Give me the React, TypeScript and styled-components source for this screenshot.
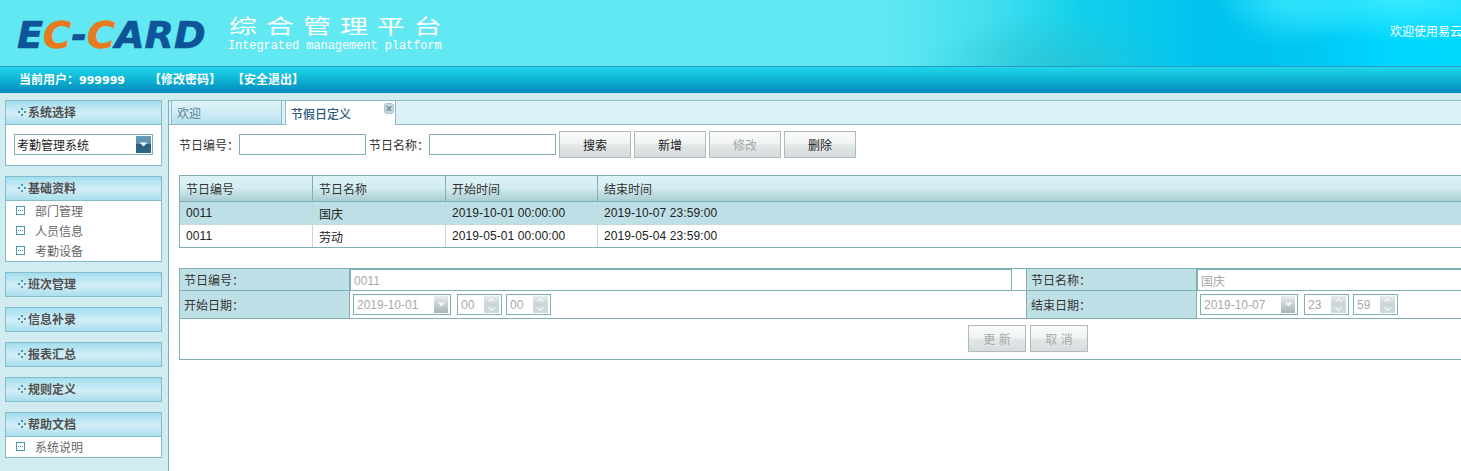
import React from "react";
import styled, { createGlobalStyle } from "styled-components";

const FONT = `"Liberation Sans", "Noto Sans CJK SC", sans-serif`;
const LINE = "#7fb0b3";

const Global = createGlobalStyle`
  html, body { margin: 0; padding: 0; overflow: hidden; background: #d1ecf1; }
  * { box-sizing: border-box; }
  body { font: 12px ${FONT}; color: #222; }
`;

const Page = styled.div`
  width: 1600px;
  min-height: 471px;
  display: flex;
  flex-direction: column;
  background: #d1ecf1;
`;

const Header = styled.header`
  height: 67px;
  border-bottom: 1px solid #2a9ac6;
  display: flex;
  align-items: flex-start;
  background:
    radial-gradient(ellipse 130px 60px at 1050px 72px, rgba(45, 190, 205, 0.7), rgba(45, 190, 205, 0) 100%),
    radial-gradient(ellipse 190px 42px at 1400px 0, rgba(62, 235, 255, 0.9), rgba(62, 235, 255, 0) 100%),
    radial-gradient(ellipse 70px 50px at 1290px 0, rgba(50, 228, 252, 0.75), rgba(50, 228, 252, 0) 100%),
    linear-gradient(90deg, #62e8f2 0, #62e8f2 880px, #42dfee 990px, #12d0ea 1080px, #00c2ee 1210px, #00c6f2 1300px, #00d8ff 1400px, #04d6fb 1600px);
`;

const Logo = styled.div`
  margin: 14px 0 0 17px;
  width: 191px;
  font: italic 700 38px/42px "DejaVu Sans", sans-serif;
  white-space: nowrap;
  color: #0d5598;
  -webkit-text-stroke: 0.6px currentColor;
  transform-origin: left center;
  transform: scaleX(1.005);
`;

const LogoAccent = styled.span`
  color: #e87a1e;
`;

const TitleBlock = styled.div`
  margin: 16px 0 0 21px;
  color: #fff;
  white-space: nowrap;
`;

const TitleMain = styled.div`
  font: 400 20px/20px "Noto Sans CJK SC", sans-serif;
  letter-spacing: 6.4px;
  height: 24px;
  transform-origin: left top;
  transform: scaleX(1.4);
`;

const TitleSub = styled.div`
  margin-left: -1px;
  font: 400 12px/12px "Liberation Mono", monospace;
  letter-spacing: -0.08px;
`;

const Welcome = styled.div`
  margin: 25px 138px 0 auto;
  color: #fff;
  line-height: 14px;
  white-space: nowrap;
`;

const UserBar = styled.div`
  height: 26px;
  display: flex;
  align-items: center;
  padding: 0 0 3px 19px;
  color: #fff;
  font-weight: 700;
  white-space: nowrap;
  background: linear-gradient(#21d6ea, #0fb6d6 45%, #0088ba);
`;

const UserNumber = styled.span`
  font: 700 11px "DejaVu Sans", sans-serif;
`;

const BarLink = styled.span<{ $gap: number }>`
  margin-left: ${(p) => p.$gap}px;
`;

const Main = styled.div`
  flex: 1;
  display: flex;
  align-items: stretch;
`;

const Sidebar = styled.aside`
  width: 168px;
  flex: none;
  padding: 7px 6px 0 5px;
  display: flex;
  flex-direction: column;
  gap: 10px;
`;

const Panel = styled.section`
  border: 1px solid #87bccc;
  background: #fff;
`;

const PanelHead = styled.div`
  height: 23px;
  display: flex;
  align-items: center;
  gap: 2px;
  padding: 0 0 2px 12px;
  font-weight: 700;
  color: #505050;
  background: linear-gradient(#a3deef, #d3eef6 55%, #a8deed);
`;

const PanelHeadBordered = styled(PanelHead)`
  border-bottom: 1px solid #87bccc;
  height: 24px;
`;

const SelectWrap = styled.div`
  padding: 9px 8px 10px;
`;

const Select = styled.div`
  height: 21px;
  border: 1px solid #7fb0b3;
  display: flex;
  align-items: center;
  justify-content: space-between;
  padding: 0 1px 0 2px;
  color: #222;
`;

const SelectArrow = styled.span`
  width: 15px;
  height: 17px;
  display: flex;
  align-items: center;
  justify-content: center;
  background: linear-gradient(#6a9cbb, #5a90b0 45%, #2a5e7e 50%, #32688a);
`;

const MenuList = styled.ul`
  list-style: none;
  margin: 0;
  padding: 0;
`;

const MenuItem = styled.li`
  height: 20px;
  display: flex;
  align-items: center;
  gap: 10px;
  padding: 0 0 2px 10px;
  color: #666;
`;

const Content = styled.main`
  flex: 1;
  margin-top: 7px;
  background: #fff;
  border-left: 1px solid #7fb0b8;
`;

const TabStrip = styled.div`
  height: 25px;
  display: flex;
  gap: 3px;
  padding-left: 2px;
  background: #dcf0f7;
  border-top: 1px solid #8dbcc6;
  border-bottom: 1px solid #8dbcc6;
`;

const Tab = styled.div<{ $active?: boolean }>`
  position: relative;
  width: 111px;
  height: ${(p) => (p.$active ? 24 : 23)}px;
  padding-left: 5px;
  display: flex;
  align-items: center;
  border: solid #8dbcc6;
  border-width: 0 1px;
  color: ${(p) => (p.$active ? "#2d5a7c" : "#5d7f96")};
  font-weight: ${(p) => (p.$active ? 500 : 400)};
  background: ${(p) => (p.$active ? "#fff" : "linear-gradient(#dff3f9, #cdebf4 55%, #b2e1ee)")};
`;

const TabClose = styled.svg`
  position: absolute;
  right: 1px;
  top: 2px;
`;

const Toolbar = styled.div`
  display: flex;
  align-items: center;
  height: 27px;
  margin: 6px 0 17px 10px;
`;

const ToolLabel = styled.label`
  width: 60px;
  flex: none;
  color: #333;
`;

const ToolInput = styled.input`
  width: 127px;
  height: 21px;
  flex: none;
  margin-right: 3px;
  border: 1px solid ${LINE};
  background: #fff;
  outline: none;
  padding: 0 3px;
  font: 12px ${FONT};
`;

const Button = styled.button<{ $w: number }>`
  width: ${(p) => p.$w}px;
  height: 27px;
  flex: none;
  margin-right: 3px;
  padding: 0;
  border: 1px solid #b2bbbb;
  font: 12px ${FONT};
  color: #222;
  background: linear-gradient(#f9fbfa, #eff3f2 48%, #e2e7e7 52%, #d6dcdd);
  &:disabled { color: #a3aaaa; }
`;

const Grid = styled.table`
  width: 1400px;
  margin-left: 10px;
  border-collapse: separate;
  border-spacing: 0;
  table-layout: fixed;
  border: 1px solid ${LINE};
`;

const Th = styled.th<{ $w?: number }>`
  width: ${(p) => (p.$w ? `${p.$w}px` : "auto")};
  height: 26px;
  padding: 0 0 0 6px;
  text-align: left;
  font-weight: 400;
  color: #333;
  border-right: 1px solid ${LINE};
  border-bottom: 1px solid ${LINE};
  background: linear-gradient(#ddf2f6, #d6eef2 45%, #a9cdd3);
`;

const Tr = styled.tr<{ $selected?: boolean }>`
  background: ${(p) => (p.$selected ? "#bedfe5" : "#fff")};
`;

const Td = styled.td<{ $last?: boolean }>`
  height: ${(p) => (p.$last ? 22 : 23)}px;
  padding: 0 0 0 6px;
  letter-spacing: 0.1px;
  color: #222;
  border-right: 1px solid #c6d8dd;
  border-bottom: ${(p) => (p.$last ? "0" : "1px solid #c6d8dd")};
`;

const Form = styled.form`
  margin: 20px 0 0 10px;
  width: 1421px;
  border: solid ${LINE};
  border-width: 1px 0 1px 1px;
  display: grid;
  grid-template-columns: 170px 676px 171px 1fr;
  grid-template-rows: 22px 28px 40px;
`;

const FieldLabel = styled.div<{ $lead?: boolean }>`
  display: flex;
  align-items: center;
  padding-left: 4px;
  color: #333;
  background: #bfdfe6;
  border-bottom: 1px solid ${LINE};
  border-right: 1px solid ${LINE};
  border-left: ${(p) => (p.$lead ? "0" : `1px solid ${LINE}`)};
`;

const FieldCell = styled.div`
  display: flex;
  align-items: center;
  border-bottom: 1px solid ${LINE};
`;

const FieldCellPad = styled(FieldCell)`
  padding-left: 3px;
`;

const WideInput = styled.input<{ $w: number }>`
  width: ${(p) => p.$w}px;
  height: 21px;
  padding: 1px 3px 0;
  border: 1px solid ${LINE};
  border-bottom-width: 0;
  outline: none;
  background: #fff;
  color: #a3aaaa;
  font: 12px ${FONT};
`;

const Combo = styled.div<{ $w: number; $gap: number }>`
  width: ${(p) => p.$w}px;
  height: 21px;
  margin-right: ${(p) => p.$gap}px;
  padding: 1px 2px 0 3px;
  display: flex;
  align-items: center;
  justify-content: space-between;
  border: 1px solid ${LINE};
  color: #a3aaaa;
  background: #fff;
`;

const ComboArrow = styled.span`
  width: 14px;
  height: 17px;
  margin-top: -1px;
  display: flex;
  align-items: center;
  justify-content: center;
  background: linear-gradient(#e9eded, #c6d0d3 50%, #a9b5b9);
`;

const Spin = styled.span`
  width: 15px;
  height: 17px;
  margin-top: -1px;
  display: flex;
  flex-direction: column;
`;

const SpinPart = styled.span<{ $down?: boolean }>`
  flex: 1;
  display: flex;
  align-items: center;
  justify-content: center;
  background: ${(p) => (p.$down ? "#cfd9dc" : "linear-gradient(#e6ebeb, #c6d2d5)")};
`;

const Actions = styled.div`
  grid-column: 1 / -1;
  display: flex;
  align-items: flex-start;
  gap: 1px;
  padding: 6px 0 0 788px;
`;

const Dots = () => (
  <svg width="8" height="8" viewBox="0 0 8 8">
    <g fill="#4c97ab">
      <rect x="3" y="0" width="2" height="2" />
      <rect x="0" y="3" width="2" height="2" />
      <rect x="6" y="3" width="2" height="2" />
      <rect x="3" y="6" width="2" height="2" />
    </g>
  </svg>
);

const BoxIcon = () => (
  <svg width="9" height="9" viewBox="0 0 9 9">
    <rect x="0.5" y="0.5" width="8" height="8" fill="#fff" stroke="#4a9ab4" />
    <g fill="#4a9ab4">
      <rect x="2" y="4" width="1" height="1" />
      <rect x="4" y="4" width="1" height="1" />
      <rect x="6" y="4" width="1" height="1" />
    </g>
  </svg>
);

const DownTriangle = ({ color }: { color: string }) => (
  <svg width="9" height="5" viewBox="0 0 9 5">
    <path d="M0.5 0.5H8.5L4.5 4.5Z" fill={color} />
  </svg>
);

const Chevron = ({ up }: { up?: boolean }) => (
  <svg width="7" height="4" viewBox="0 0 7 4">
    <path d={up ? "M0.5 3.5L3.5 0.7L6.5 3.5" : "M0.5 0.5L3.5 3.3L6.5 0.5"} fill="none" stroke="#f4f7f7" strokeWidth="1.2" />
  </svg>
);

const CloseIcon = () => (
  <TabClose width="10" height="11" viewBox="0 0 10 11">
    <rect x="0.5" y="0.5" width="9" height="10" rx="2.5" fill="#c4d7de" stroke="#a9c6d0" />
    <path d="M2.8 3.2L7.2 7.8M7.2 3.2L2.8 7.8" stroke="#6f8d9c" strokeWidth="1.6" />
  </TabClose>
);

const DateBox = ({ value }: { value: string }) => (
  <Combo $w={98} $gap={6}>
    <span>{value}</span>
    <ComboArrow>
      <DownTriangle color="#f2f5f5" />
    </ComboArrow>
  </Combo>
);

const SpinBox = ({ value, gap }: { value: string; gap: number }) => (
  <Combo $w={45} $gap={gap}>
    <span>{value}</span>
    <Spin>
      <SpinPart>
        <Chevron up />
      </SpinPart>
      <SpinPart $down>
        <Chevron />
      </SpinPart>
    </Spin>
  </Combo>
);

const SideHead = ({ title }: { title: string }) => (
  <PanelHead>
    <Dots />
    <span>{title}</span>
  </PanelHead>
);

const SideHeadOpen = ({ title }: { title: string }) => (
  <PanelHeadBordered>
    <Dots />
    <span>{title}</span>
  </PanelHeadBordered>
);

const Menu = ({ items }: { items: string[] }) => (
  <MenuList>
    {items.map((t) => (
      <MenuItem key={t}>
        <BoxIcon />
        <span>{t}</span>
      </MenuItem>
    ))}
  </MenuList>
);

const rows = [
  ["0011", "国庆", "2019-10-01 00:00:00", "2019-10-07 23:59:00"],
  ["0011", "劳动", "2019-05-01 00:00:00", "2019-05-04 23:59:00"],
];

export default function App() {
  return (
    <Page>
      <Global />
      <Header>
        <Logo>
          E<LogoAccent>C</LogoAccent>-<LogoAccent>C</LogoAccent>ARD
        </Logo>
        <TitleBlock>
          <TitleMain>综合管理平台</TitleMain>
          <TitleSub>Integrated management platform</TitleSub>
        </TitleBlock>
        <Welcome>欢迎使用易云</Welcome>
      </Header>
      <UserBar>
        <span>当前用户：<UserNumber>999999</UserNumber></span>
        <BarLink $gap={24}>【修改密码】</BarLink>
        <BarLink $gap={11}>【安全退出】</BarLink>
      </UserBar>
      <Main>
        <Sidebar>
          <Panel>
            <SideHeadOpen title="系统选择" />
            <SelectWrap>
              <Select>
                <span>考勤管理系统</span>
                <SelectArrow>
                  <DownTriangle color="#fff" />
                </SelectArrow>
              </Select>
            </SelectWrap>
          </Panel>
          <Panel>
            <SideHeadOpen title="基础资料" />
            <Menu items={["部门管理", "人员信息", "考勤设备"]} />
          </Panel>
          <Panel><SideHead title="班次管理" /></Panel>
          <Panel><SideHead title="信息补录" /></Panel>
          <Panel><SideHead title="报表汇总" /></Panel>
          <Panel><SideHead title="规则定义" /></Panel>
          <Panel>
            <SideHeadOpen title="帮助文档" />
            <Menu items={["系统说明"]} />
          </Panel>
        </Sidebar>
        <Content>
          <TabStrip>
            <Tab>欢迎</Tab>
            <Tab $active>
              节假日定义
              <CloseIcon />
            </Tab>
          </TabStrip>
          <Toolbar>
            <ToolLabel>节日编号：</ToolLabel>
            <ToolInput />
            <ToolLabel>节日名称：</ToolLabel>
            <ToolInput />
            <Button $w={72}>搜索</Button>
            <Button $w={72}>新增</Button>
            <Button $w={72} disabled>修改</Button>
            <Button $w={72}>删除</Button>
          </Toolbar>
          <Grid>
            <thead>
              <tr>
                <Th $w={133}>节日编号</Th>
                <Th $w={133}>节日名称</Th>
                <Th $w={152}>开始时间</Th>
                <Th>结束时间</Th>
              </tr>
            </thead>
            <tbody>
              {rows.map((r, i) => (
                <Tr key={r[2]} $selected={i === 0}>
                  {r.map((c) => (
                    <Td key={c} $last={i === 1}>{c}</Td>
                  ))}
                </Tr>
              ))}
            </tbody>
          </Grid>
          <Form>
            <FieldLabel $lead>节日编号：</FieldLabel>
            <FieldCell>
              <WideInput $w={662} value="0011" readOnly />
            </FieldCell>
            <FieldLabel>节日名称：</FieldLabel>
            <FieldCell>
              <WideInput $w={404} value="国庆" readOnly />
            </FieldCell>
            <FieldLabel $lead>开始日期：</FieldLabel>
            <FieldCellPad>
              <DateBox value="2019-10-01" />
              <SpinBox value="00" gap={4} />
              <SpinBox value="00" gap={0} />
            </FieldCellPad>
            <FieldLabel>结束日期：</FieldLabel>
            <FieldCellPad>
              <DateBox value="2019-10-07" />
              <SpinBox value="23" gap={4} />
              <SpinBox value="59" gap={0} />
            </FieldCellPad>
            <Actions>
              <Button $w={58} disabled type="button">更 新</Button>
              <Button $w={58} disabled type="button">取 消</Button>
            </Actions>
          </Form>
        </Content>
      </Main>
    </Page>
  );
}
